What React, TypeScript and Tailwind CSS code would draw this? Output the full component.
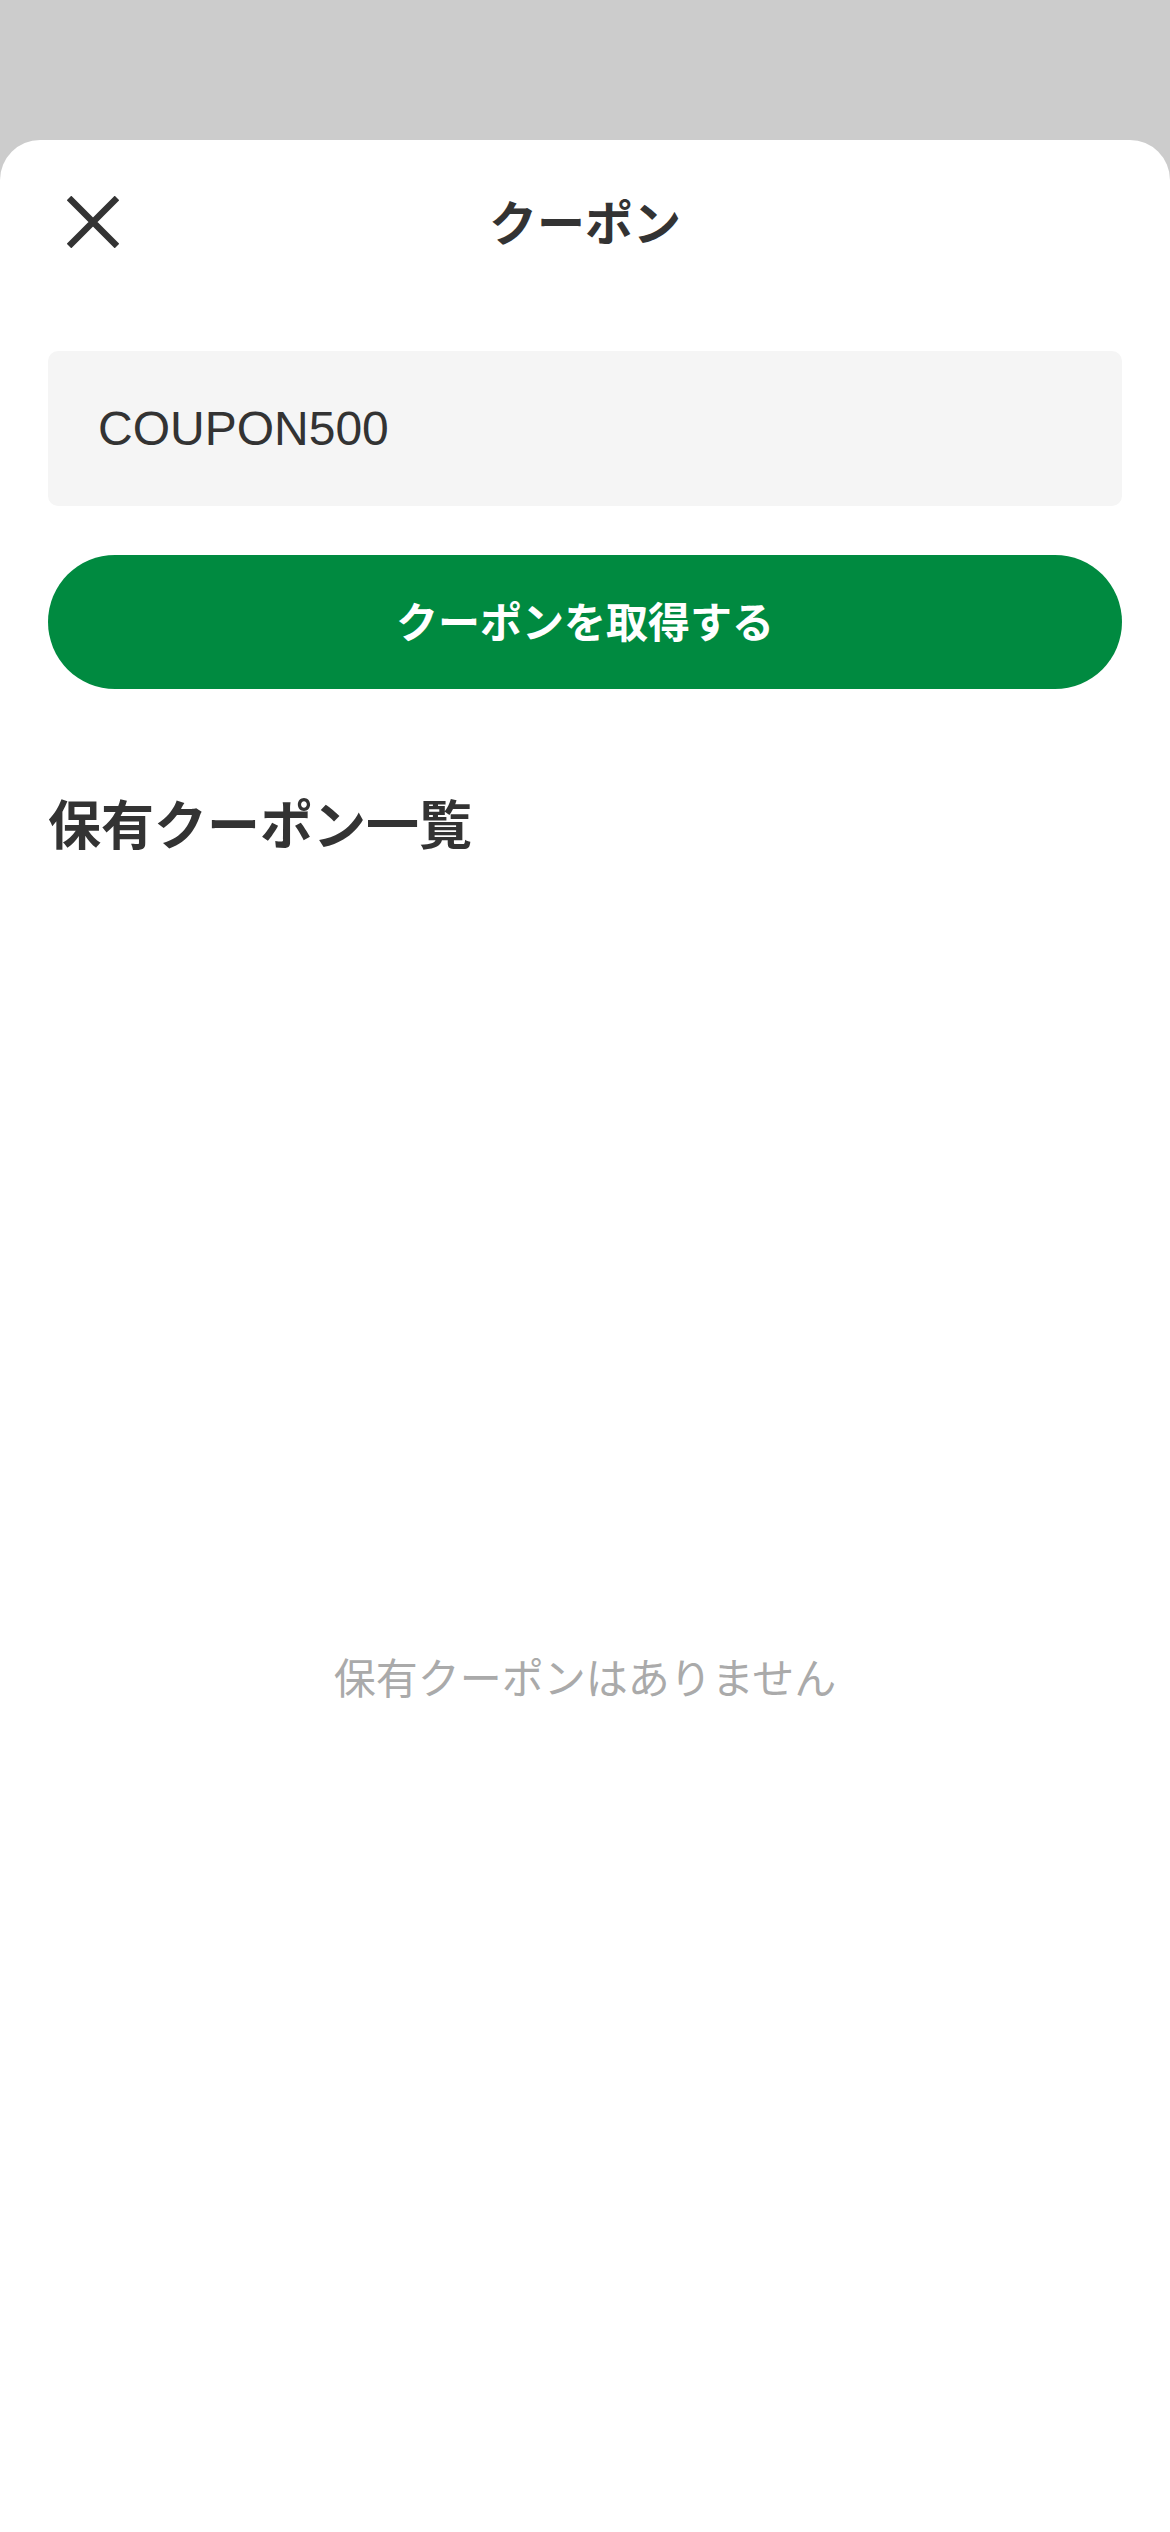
import type { ReactNode } from "react";

const JP = "font-['Noto_Sans_CJK_JP',sans-serif]";

function CloseIcon() {
  return (
    <svg width="52" height="52" viewBox="0 0 52 52" aria-hidden>
      <path d="M2 2 L50 50 M50 2 L2 50" stroke="#333333" strokeWidth="6.5" strokeLinecap="butt" />
    </svg>
  );
}

function Header({ title }: { title: string }) {
  return (
    <header className="relative flex h-[162px] items-center justify-center">
      <button className="absolute left-[67px] top-[56px] flex h-[52px] w-[52px] items-center justify-center">
        <CloseIcon />
      </button>
      <h1 className={`${JP} pb-[2px] text-[48px] font-bold leading-none text-[#333333]`}>{title}</h1>
    </header>
  );
}

function Section({ children }: { children: ReactNode }) {
  return <section className="flex flex-col px-[48px]">{children}</section>;
}

export default function App() {
  return (
    <div className="min-h-[2532px] w-[1170px] bg-[#cccccc] pt-[140px]">
      <div className="min-h-[2392px] rounded-t-[40px] bg-white">
        <Header title="クーポン" />

        <Section>
          <div className="mt-[49px] flex h-[155px] items-center rounded-[10px] bg-[#f5f5f5] px-[50px]">
            <span className="font-['Liberation_Sans',Arial,sans-serif] text-[48px] leading-none text-[#333333]">
              COUPON500
            </span>
          </div>

          <button className="mt-[49px] flex h-[134px] items-center justify-center rounded-full bg-[#008a40] pb-[5px]">
            <span className={`${JP} text-[42px] font-bold leading-none text-white`}>
              クーポンを取得する
            </span>
          </button>

          <h2 className={`${JP} mt-[95px] text-[53px] font-bold leading-[76px] text-[#333333]`}>
            保有クーポン一覧
          </h2>
        </Section>

        <p className={`${JP} mt-[786px] text-center text-[42px] leading-[60px] text-[#aaaaaa]`}>
          保有クーポンはありません
        </p>
      </div>
    </div>
  );
}
